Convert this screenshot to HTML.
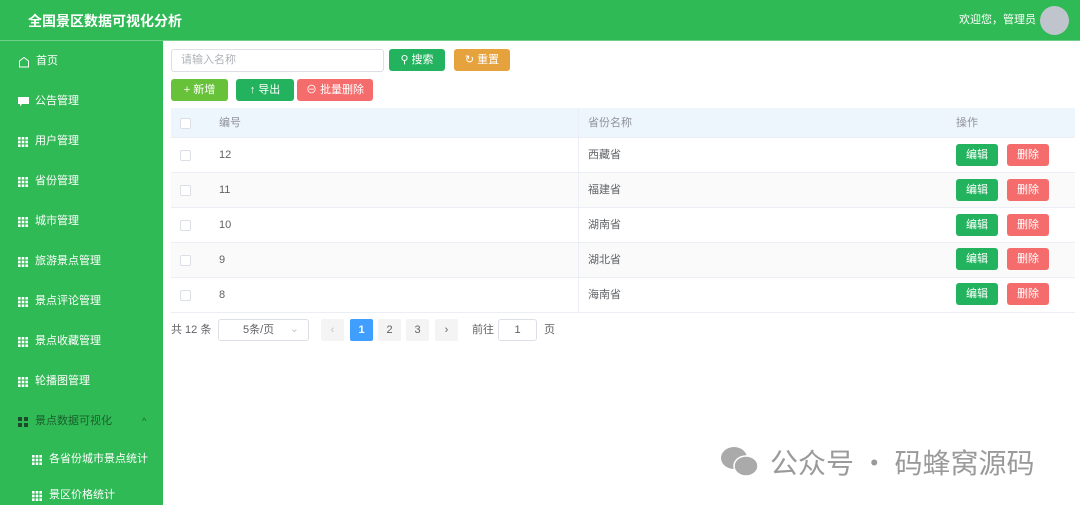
<!DOCTYPE html>
<html><head><meta charset="utf-8"><style>
*{box-sizing:border-box;margin:0;padding:0}
body{width:1080px;height:505px;overflow:hidden;background:#fff;font-family:"Liberation Sans","Noto Sans CJK SC",sans-serif;font-size:11px;line-height:13px;color:#606266;position:relative}
.hd{position:absolute;left:0;top:0;width:1080px;height:41px;background:#2fba55;border-bottom:1px solid #6fd08a}
.hd .t{position:absolute;left:28px;top:12px;color:#fff;font-size:14px;line-height:18px;font-weight:bold}
.hd .u{position:absolute;right:44px;top:14px;color:#fff;font-size:11px}
.hd .av{position:absolute;left:1040px;top:6px;width:29px;height:29px;border-radius:50%;background:#c0c4cc}
.sb{position:absolute;left:0;top:41px;width:163px;height:464px;background:#2fba55}
.mi{position:absolute;left:18px;color:#fff;font-size:11px;display:flex;align-items:center}
.mi svg{margin-right:7px}
.btn{position:absolute;height:22px;border-radius:3px;color:#fff;font-size:11px;display:flex;align-items:center;justify-content:center}
.tbl{position:absolute;left:171px;top:108px;width:904px}
.row{position:absolute;left:0;width:904px;height:35px;border-bottom:1px solid #ebeef5}
.row span{position:absolute;top:11px;line-height:13px}
.cb{position:absolute;left:9px;top:12px;width:11px;height:11px;border:1px solid #dcdfe6;border-radius:2px;background:#fff}
.pg{position:absolute;top:319px;height:22px;border-radius:2px;background:#f4f4f5;font-size:11px;display:flex;align-items:center;justify-content:center;width:23px;color:#606266}
</style></head><body>
<svg width="0" height="0" style="position:absolute"><defs><g id="g"><rect x="0" y="0" width="2.6" height="2.6"/><rect x="3.7" y="0" width="2.6" height="2.6"/><rect x="7.4" y="0" width="2.6" height="2.6"/><rect x="0" y="3.7" width="2.6" height="2.6"/><rect x="3.7" y="3.7" width="2.6" height="2.6"/><rect x="7.4" y="3.7" width="2.6" height="2.6"/><rect x="0" y="7.4" width="2.6" height="2.6"/><rect x="3.7" y="7.4" width="2.6" height="2.6"/><rect x="7.4" y="7.4" width="2.6" height="2.6"/></g></defs></svg>
<div class="hd"><div class="t">全国景区数据可视化分析</div><div class="u">欢迎您，管理员</div><div class="av"></div></div>
<div class="sb">
<div class="mi" style="top:14px"><svg width="12" height="12" viewBox="0 0 12 12" style="margin-right:6px"><path d="M1.5 11V5L6 1.5 10.5 5V11Z" fill="none" stroke="#fff" stroke-width="1"/></svg>首页</div>
<div class="mi" style="top:54px"><svg width="11" height="10" viewBox="0 0 11 10" style="margin-right:6px"><path d="M0 0H11V7H4L2 9.5V7H0Z" fill="#fff"/></svg>公告管理</div>
<div class="mi" style="top:94px"><svg width="10" height="10" fill="#fff"><use href="#g"/></svg>用户管理</div>
<div class="mi" style="top:134px"><svg width="10" height="10" fill="#fff"><use href="#g"/></svg>省份管理</div>
<div class="mi" style="top:174px"><svg width="10" height="10" fill="#fff"><use href="#g"/></svg>城市管理</div>
<div class="mi" style="top:214px"><svg width="10" height="10" fill="#fff"><use href="#g"/></svg>旅游景点管理</div>
<div class="mi" style="top:254px"><svg width="10" height="10" fill="#fff"><use href="#g"/></svg>景点评论管理</div>
<div class="mi" style="top:294px"><svg width="10" height="10" fill="#fff"><use href="#g"/></svg>景点收藏管理</div>
<div class="mi" style="top:334px"><svg width="10" height="10" fill="#fff"><use href="#g"/></svg>轮播图管理</div>
<div class="mi" style="top:374px;color:#1d5e2e"><svg width="10" height="10"><rect width="4" height="4" fill="#1d4a2a"/><rect x="6" width="4" height="4" fill="#1d4a2a"/><rect y="6" width="4" height="4" fill="#1d4a2a"/><rect x="6" y="6" width="4" height="4" fill="#1d4a2a"/></svg>景点数据可视化<span style="position:absolute;left:124px;font-size:9px">^</span></div>
<div class="mi" style="top:412px;left:32px"><svg width="10" height="10" fill="#fff"><use href="#g"/></svg>各省份城市景点统计</div>
<div class="mi" style="top:448px;left:32px"><svg width="10" height="10" fill="#fff"><use href="#g"/></svg>景区价格统计</div>
</div>
<div style="position:absolute;left:171px;top:49px;width:213px;height:23px;border:1px solid #dcdfe6;border-radius:3px;color:#b0b3b8;padding:4px 9px">请输入名称</div>
<div class="btn" style="left:389px;top:49px;width:56px;background:#23b35e">⚲ 搜索</div>
<div class="btn" style="left:454px;top:49px;width:56px;background:#e6a23c">↻ 重置</div>
<div class="btn" style="left:171px;top:79px;width:57px;background:#67c23a">+ 新增</div>
<div class="btn" style="left:236px;top:79px;width:58px;background:#23b35e">↑ 导出</div>
<div class="btn" style="left:297px;top:79px;width:76px;background:#f56c6c">⊖ 批量删除</div>
<div class="tbl">
<div class="row" style="top:0;height:30px;background:#eef6fd;color:#909399"><i class="cb" style="top:10px"></i><span style="left:48px;top:9px">编号</span><span style="left:417px;top:9px">省份名称</span><span style="left:785px;top:9px">操作</span></div>
<div class="row" style="top:30px;background:#fff"><i class="cb"></i><span style="left:48px">12</span><span style="left:417px">西藏省</span></div>
<div class="row" style="top:65px;background:#fafafa"><i class="cb"></i><span style="left:48px">11</span><span style="left:417px">福建省</span></div>
<div class="row" style="top:100px;background:#fff"><i class="cb"></i><span style="left:48px">10</span><span style="left:417px">湖南省</span></div>
<div class="row" style="top:135px;background:#fafafa"><i class="cb"></i><span style="left:48px">9</span><span style="left:417px">湖北省</span></div>
<div class="row" style="top:170px;background:#fff"><i class="cb"></i><span style="left:48px">8</span><span style="left:417px">海南省</span></div>
<div style="position:absolute;left:407px;top:0;width:1px;height:204px;background:#ebeef5"></div>
</div>
<div class="btn" style="left:956px;top:144px;width:42px;background:#23b35e">编辑</div><div class="btn" style="left:1007px;top:144px;width:42px;background:#f56c6c">删除</div>
<div class="btn" style="left:956px;top:179px;width:42px;background:#23b35e">编辑</div><div class="btn" style="left:1007px;top:179px;width:42px;background:#f56c6c">删除</div>
<div class="btn" style="left:956px;top:214px;width:42px;background:#23b35e">编辑</div><div class="btn" style="left:1007px;top:214px;width:42px;background:#f56c6c">删除</div>
<div class="btn" style="left:956px;top:248px;width:42px;background:#23b35e">编辑</div><div class="btn" style="left:1007px;top:248px;width:42px;background:#f56c6c">删除</div>
<div class="btn" style="left:956px;top:283px;width:42px;background:#23b35e">编辑</div><div class="btn" style="left:1007px;top:283px;width:42px;background:#f56c6c">删除</div>
<div style="position:absolute;left:171px;top:324px">共 12 条</div>
<div style="position:absolute;left:218px;top:319px;width:91px;height:22px;border:1px solid #dcdfe6;border-radius:3px;padding:4px 0 0 24px">5条/页<span style="position:absolute;right:9px;top:3px;color:#c0c4cc">⌄</span></div>
<div class="pg" style="left:321px;color:#c0c4cc">‹</div>
<div class="pg" style="left:350px;background:#409eff;color:#fff;font-weight:bold">1</div>
<div class="pg" style="left:378px">2</div>
<div class="pg" style="left:406px">3</div>
<div class="pg" style="left:435px">›</div>
<div style="position:absolute;left:472px;top:324px">前往</div>
<div style="position:absolute;left:498px;top:319px;width:39px;height:22px;border:1px solid #dcdfe6;border-radius:3px;text-align:center;padding-top:4px">1</div>
<div style="position:absolute;left:544px;top:324px">页</div>
<svg style="position:absolute;left:720px;top:445px" width="42" height="34"><ellipse cx="14" cy="13" rx="13" ry="11" fill="#aaa"/><ellipse cx="26" cy="21" rx="12" ry="10" fill="#aaa" stroke="#fff" stroke-width="1.5"/></svg>
<div style="position:absolute;left:770px;top:444px;font-size:28px;line-height:36px;color:#9a9a9a;font-family:'Noto Sans CJK SC',sans-serif;white-space:nowrap">公众号 · 码蜂窝源码</div>
</body></html>
